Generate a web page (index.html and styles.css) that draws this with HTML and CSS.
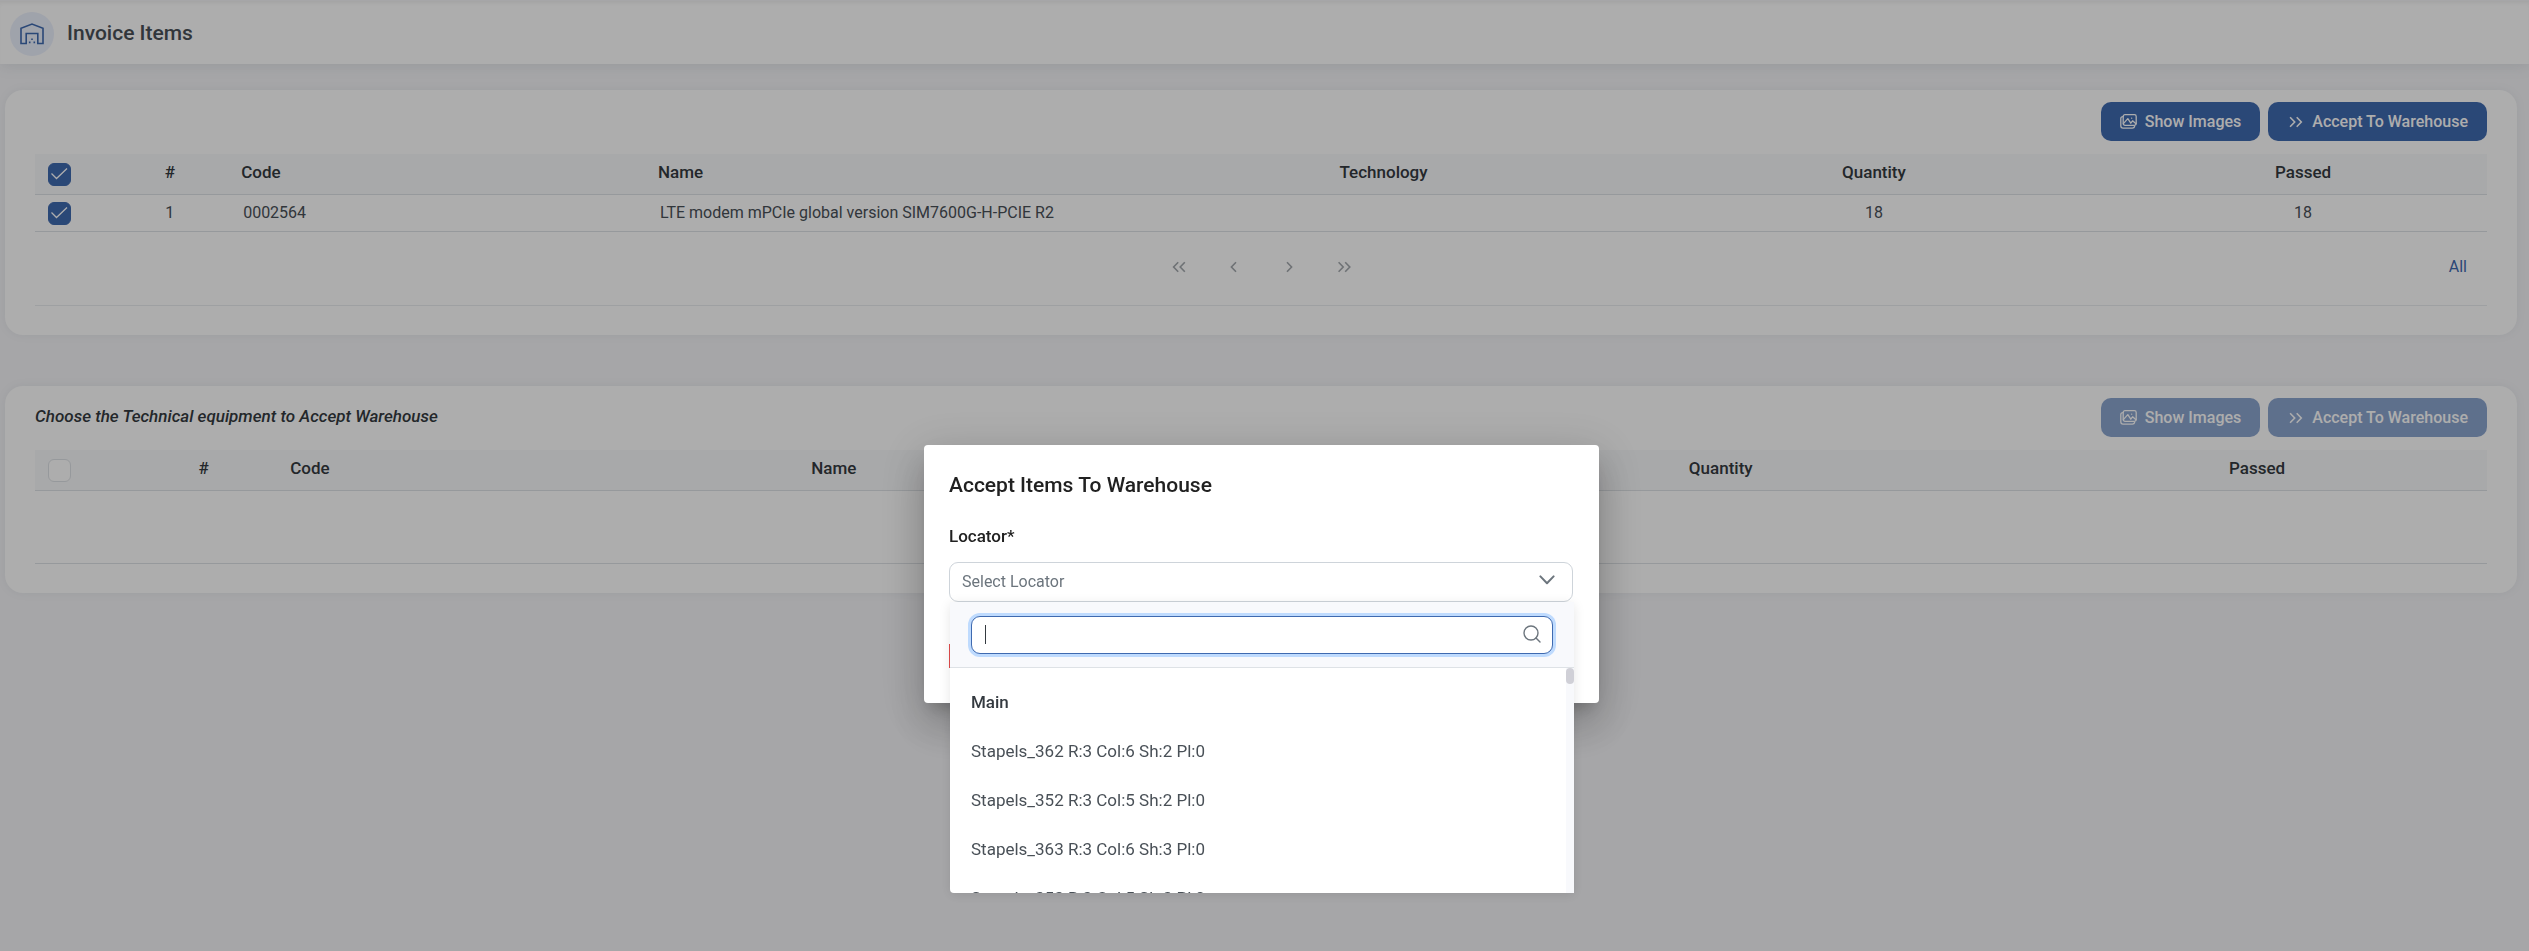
FILE: index.html
```html
<!DOCTYPE html>
<html lang="en">
<head>
<meta charset="utf-8">
<title>Invoice Items</title>
<link rel="stylesheet" href="styles.css">
</head>
<body>
<svg class="sprite" aria-hidden="true">
  <symbol id="i-images" viewBox="0 0 17 15"><g fill="none" stroke="currentColor" stroke-width="1.3" stroke-linejoin="round" stroke-linecap="round"><rect x="3.2" y=".7" width="13" height="10.6" rx="1.8"/><path d="M3 2.600C1.600 2.600.8 3.400.8 4.600v7.200c0 1.400.8 2.300 2.200 2.300h9.400c1.200 0 2-.7 2.200-1.600"/><path d="M3.400 9.600 7.800 4.600l3 4.600 1.800-2.400 3.400 3M11.600 4.200h.1"/></g></symbol>
  <symbol id="i-dright" viewBox="0 0 14 12"><path d="M1.600 1.200 6.200 6l-4.600 4.800M8.200 1.200 12.800 6l-4.600 4.800" fill="none" stroke="currentColor" stroke-width="1.6"/></symbol>
  <symbol id="i-dleft" viewBox="0 0 14 12"><path d="M6.200 1.200 1.600 6l4.600 4.800M12.800 1.200 8.200 6l4.600 4.800" fill="none" stroke="currentColor" stroke-width="1.6"/></symbol>
  <symbol id="i-right" viewBox="0 0 14 12"><path d="M5 1.200 9.600 6 5 10.800" fill="none" stroke="currentColor" stroke-width="1.6"/></symbol>
  <symbol id="i-left" viewBox="0 0 14 12"><path d="M9 1.200 4.400 6 9 10.800" fill="none" stroke="currentColor" stroke-width="1.6"/></symbol>
</svg>

<header class="topbar">
  <span class="badge"><svg viewBox="0 0 24 22" width="24" height="22" fill="none" stroke="currentColor" stroke-width="1.6"><path d="M1 20.500V5.200L12 1l11 4.200v15.300h-5.200v-10H6.200v10z"/><path d="M11.200 16.200h1.600M8.900 19.400h1.600M13.500 19.400h1.600"/></svg></span>
  <h1 class="title">Invoice Items</h1>
</header>

<main class="content">
  <section class="card">
    <div class="toolbar">
      <span></span>
      <div class="actions">
        <button class="btn"><svg width="17" height="15"><use href="#i-images"/></svg>Show Images</button>
        <button class="btn"><svg width="17" height="12"><use href="#i-dright"/></svg>Accept To Warehouse</button>
      </div>
    </div>
    <table class="grid">
      <colgroup><col style="width:3%"><col style="width:5%"><col style="width:17%"><col style="width:20%"><col style="width:20%"><col style="width:20%"><col style="width:15%"></colgroup>
      <thead><tr>
        <th class="pick"><input class="check" type="checkbox" aria-label="Select all" checked></th>
        <th class="mid">#</th><th>Code</th><th>Name</th><th class="mid">Technology</th><th class="mid">Quantity</th><th class="mid">Passed</th>
      </tr></thead>
      <tbody><tr>
        <td class="pick"><input class="check" type="checkbox" aria-label="Select item 1" checked></td>
        <td class="mid">1</td><td>0002564</td><td>LTE modem mPCIe global version SIM7600G-H-PCIE R2</td><td></td><td class="mid">18</td><td class="mid">18</td>
      </tr></tbody>
    </table>
    <nav class="pager" aria-label="Pages">
      <div class="pages">
        <button class="page" aria-label="First page"><svg width="14" height="12"><use href="#i-dleft"/></svg></button>
        <button class="page" aria-label="Previous page"><svg width="14" height="12"><use href="#i-left"/></svg></button>
        <button class="page" aria-label="Next page"><svg width="14" height="12"><use href="#i-right"/></svg></button>
        <button class="page" aria-label="Last page"><svg width="14" height="12"><use href="#i-dright"/></svg></button>
      </div>
      <button class="all">All</button>
    </nav>
  </section>

  <section class="card card-second">
    <div class="toolbar">
      <h2 class="hint">Choose the Technical equipment to Accept Warehouse</h2>
      <div class="actions">
        <button class="btn" disabled><svg width="17" height="15"><use href="#i-images"/></svg>Show Images</button>
        <button class="btn" disabled><svg width="17" height="12"><use href="#i-dright"/></svg>Accept To Warehouse</button>
      </div>
    </div>
    <table class="grid">
      <colgroup><col style="width:3.75%"><col style="width:6.25%"><col style="width:21.25%"><col style="width:25%"><col style="width:25%"><col style="width:18.75%"></colgroup>
      <thead><tr>
        <th class="pick"><input class="check" type="checkbox" aria-label="Select all equipment"></th>
        <th class="mid">#</th><th>Code</th><th>Name</th><th class="mid">Quantity</th><th class="mid">Passed</th>
      </tr></thead>
      <tbody><tr class="blank"><td colspan="6"></td></tr></tbody>
    </table>
  </section>
</main>

<div class="backdrop">
  <div class="dialog" role="dialog" aria-labelledby="dlg-title">
    <h2 class="dialog-title" id="dlg-title">Accept Items To Warehouse</h2>
    <label class="label" for="locator">Locator*</label>
    <div class="field">
      <select class="select" id="locator"><option>Select Locator</option></select>
      <svg class="chevron" width="16" height="10" viewBox="0 0 16 10"><path d="M1.400 1.400 8 8.200l6.600-6.800" fill="none" stroke="currentColor" stroke-width="2" stroke-linecap="round" stroke-linejoin="round"/></svg>
      <div class="panel">
        <div class="panel-head">
          <div class="search">
            <input class="search-input" type="text" aria-label="Filter locators">
            <svg class="lens" width="18" height="18" viewBox="0 0 18 18" fill="none" stroke="currentColor" stroke-width="1.4" stroke-linecap="round"><circle cx="8" cy="8" r="7"/><path d="m13 13 4 4"/></svg>
          </div>
        </div>
        <div class="list-wrap">
          <ul class="list" role="listbox" aria-label="Locators">
            <li class="group">Main</li>
            <li class="option" role="option">Stapels_362 R:3 Col:6 Sh:2 Pl:0</li>
            <li class="option" role="option">Stapels_352 R:3 Col:5 Sh:2 Pl:0</li>
            <li class="option" role="option">Stapels_363 R:3 Col:6 Sh:3 Pl:0</li>
            <li class="option" role="option">Stapels_353 R:3 Col:5 Sh:3 Pl:0</li>
          </ul>
          <div class="track"><div class="thumb"></div></div>
        </div>
      </div>
    </div>
    <div class="dialog-foot"><button class="cancel" aria-label="Cancel"></button></div>
  </div>
</div>
</body>
</html>
```
FILE: styles.css
```css
* { box-sizing: border-box; }
body {
  margin: 0;
  min-height: 100vh;
  background: #f5f5f8;
  font-family: Roboto, "Liberation Sans", sans-serif;
  font-size: 16px;
  line-height: 20px;
  color: #495057;
  overflow: hidden;
}
.sprite { position: absolute; width: 0; height: 0; }
h1, h2, ul { margin: 0; padding: 0; }
button, input, select { font: inherit; }
svg { display: block; flex: none; }

.topbar {
  display: flex;
  align-items: center;
  gap: 13px;
  height: 64px;
  padding: 3px 10px 0;
  background: #fff;
  border-top: 1px solid #f5f5f8;
  box-shadow: inset 0 4px 4px -2px rgba(0, 0, 0, .06), 0 2px 14px rgba(69, 90, 100, .12);
}
.badge {
  display: flex;
  align-items: center;
  justify-content: center;
  width: 44px;
  height: 44px;
  border-radius: 50%;
  background: #ebf0fd;
  color: #3f6ab0;
}
.title { font-size: 21px; line-height: 28px; font-weight: 500; padding-bottom: 3px; }

.content { padding: 26px 12px 0 5px; }
.card {
  background: #fff;
  border-radius: 18px;
  padding: 12px 30px 29px;
  box-shadow: 0 0 10px rgba(69, 90, 100, .08);
}
.card-second { margin-top: 51px; }
.toolbar { display: flex; justify-content: space-between; align-items: flex-start; padding-bottom: 13px; }
.actions { display: flex; gap: 8px; }
.hint { padding-top: 8px; font-size: 17px; font-weight: 500; font-style: italic; color: #343a40; }
.btn {
  display: flex;
  align-items: center;
  gap: 8px;
  height: 39px;
  padding: 0 19px;
  border: 0;
  border-radius: 10px;
  background: #3f6ab0;
  color: #fff;
  font-weight: 500;
}
.btn:disabled { opacity: .6; }

.grid { width: 100%; table-layout: fixed; border-collapse: separate; border-spacing: 0; }
.grid th {
  height: 41px;
  padding: 0 10px 4px;
  background: #f8f9fb;
  border-bottom: 1px solid #dee2e6;
  text-align: left;
  font-size: 17px;
  font-weight: 500;
  color: #343a40;
}
.grid td { height: 37px; padding: 0 12px; border-bottom: 1px solid #dee2e6; }
.grid .mid { text-align: center; }
.grid .pick { padding: 0 13px; }
.grid .blank td { height: 73px; }
.check {
  display: block;
  appearance: none;
  width: 23px;
  height: 23px;
  margin: 0;
  border: 1px solid #dee2e6;
  border-radius: 6px;
  background: #fff;
}
.check:checked {
  border-color: #3f6ab0;
  background: #3f6ab0 url("data:image/svg+xml,%3Csvg xmlns='http://www.w3.org/2000/svg' viewBox='0 0 21 21'%3E%3Cpath d='M2.500 9.500l5 5L18 4.500' fill='none' stroke='white' stroke-width='1.300'/%3E%3C/svg%3E") center / 21px no-repeat;
}

.pager {
  display: grid;
  grid-template-columns: 1fr auto 1fr;
  align-items: center;
  height: 74px;
  padding-bottom: 4px;
  border-bottom: 1px solid #e9ecef;
}
.pages { grid-column: 2; display: flex; gap: 8px; }
.page {
  display: flex;
  align-items: center;
  justify-content: center;
  width: 47px;
  height: 47px;
  padding: 0;
  border: 0;
  background: none;
  color: #a3a8ad;
}
.all { justify-self: end; padding: 0 20px; border: 0; background: none; color: #3f6ab0; }

.backdrop {
  position: fixed;
  inset: 0;
  display: flex;
  justify-content: center;
  align-items: flex-start;
  padding: 445px 6px 0 0;
  background: rgba(0, 0, 0, .32);
}
.dialog {
  width: 675px;
  padding: 24px 26px 35px 25px;
  border-radius: 4px;
  background: #fff;
  box-shadow: 0 11px 15px -7px rgba(0, 0, 0, .2), 0 24px 38px 3px rgba(0, 0, 0, .14), 0 9px 46px 8px rgba(0, 0, 0, .12);
}
.dialog-title { font-size: 21px; line-height: 32px; font-weight: 500; color: #212121; }
.label { display: block; padding: 25px 0 16px; font-size: 17px; font-weight: 500; color: #212121; }
.field { position: relative; }
.select {
  display: block;
  appearance: none;
  width: 100%;
  height: 40px;
  padding: 0 12px;
  border: 1px solid #ced4da;
  border-radius: 9px;
  background: #fff;
  color: #6c757d;
}
.chevron { position: absolute; right: 18px; top: 13px; color: #6c757d; }
.panel {
  position: absolute;
  top: 100%;
  left: 1px;
  right: -1px;
  border-radius: 4px 4px 0 4px;
  background: #fff;
  box-shadow: 0 2px 12px rgba(0, 0, 0, .1);
}
.panel-head { padding: 14px 21px 13px; background: #f8f9fc; border-bottom: 1px solid #dee2e6; }
.search { position: relative; }
.search-input {
  display: block;
  width: 100%;
  height: 38px;
  padding: 0 40px 0 12px;
  border: 1px solid #3f6ab0;
  border-radius: 9px;
  background: #fff;
  box-shadow: 0 0 0 3px #bfdbfe;
  outline: 0;
}
.search::after {
  content: "";
  position: absolute;
  left: 14px;
  top: 9px;
  width: 1px;
  height: 19px;
  background: #343a40;
}
.lens { position: absolute; right: 12px; top: 9px; color: #6c757d; }
.list-wrap { display: flex; height: 225px; }
.list { flex: 1; overflow: hidden; padding-top: 10px; list-style: none; font-size: 17px; color: #495057; }
.group, .option { height: 49px; padding: 14px 21px; line-height: 21px; }
.group { font-weight: 500; color: #343a40; }
.track { width: 8px; background: #f8f9fc; }
.thumb { height: 16px; border-radius: 4px; background: #d0d0d7; }
.dialog-foot { padding-top: 42px; }
.cancel { display: block; width: 90px; height: 24px; padding: 0; border: 1px solid #e24c4c; background: #fff; }
```
